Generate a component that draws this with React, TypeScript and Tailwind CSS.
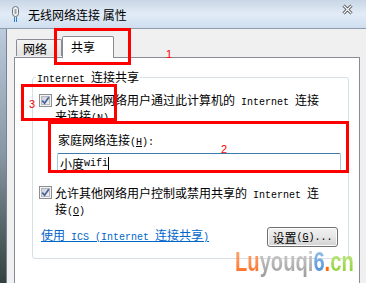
import type { ReactNode } from 'react';

// Latin runs in the dialog use a half-width mono face, like SimSun does
function M({ children }: { children: ReactNode }) {
  return <span className="font-['Liberation_Mono',monospace] text-[10px]">{children}</span>;
}

function CheckBox() {
  return (
    <svg width="13" height="13" viewBox="0 0 13 13" className="shrink-0">
      <defs>
        <linearGradient id="cbfill" x1="0" y1="0" x2="1" y2="1">
          <stop offset="0" stopColor="#c9ced6" />
          <stop offset="1" stopColor="#f4f5f7" />
        </linearGradient>
      </defs>
      <rect x="0.5" y="0.5" width="12" height="12" fill="#f4f4f4" stroke="#8e8f8f" />
      <rect x="2.5" y="2.5" width="8" height="8" fill="url(#cbfill)" stroke="#b3b8c0" />
      <path d="M3.3 6.6 L5.6 9.2 L9.8 3.2" fill="none" stroke="#4a5f97" strokeWidth="1.7" />
    </svg>
  );
}

function TitleBar() {
  return (
    <div className="h-[29px] shrink-0 flex items-center border-b border-[#8d9bad] bg-linear-to-b from-[#c9d6e5] via-[#e2ecf7] to-[#cfdeef]">
      <svg width="7" height="16" viewBox="0 0 7 16" className="ml-[12px]">
        <rect x="0.5" y="0.5" width="6" height="10" rx="3" fill="#f2f4f6" stroke="#6b6f75" />
        <rect x="2.5" y="3" width="2" height="5" fill="#9aa2ab" />
        <rect x="2" y="11" width="1" height="5" fill="#2f7fd0" />
        <rect x="4" y="11" width="1" height="5" fill="#2f7fd0" />
      </svg>
      <span className="ml-[9px]">无线网络连接 属性</span>
    </div>
  );
}

function GroupBox() {
  return (
    <div className="relative ml-[17px] mt-[19px] w-[317px] border border-[#d5dfe5] rounded-[3px] pb-[11px]">
      <span className="absolute left-[3px] -top-[8px] bg-white px-[1px]">
        <M>Internet </M>连接共享
      </span>

      <div className="mt-[16px] flex">
        <div className="ml-[6px]">
          <CheckBox />
        </div>
        <div className="ml-[3px] -mt-[1px]">
          允许其他网络用户通过此计算机的<M> Internet </M>连接
          <br />
          来连接<M>(<u>N</u>)</M>
        </div>
      </div>

      <div className="mt-[8px] ml-[25px]">
        家庭网络连接<M>(<u>H</u>):</M>
      </div>

      <div className="mt-[4px] ml-[24px] w-[284px] h-[20px] flex items-center pl-[2px] border border-t-[#3d7bad] border-x-[#a4c9e3] border-b-[#b7d9ed] rounded-[2px]">
        <span>小度</span>
        <M>wifi</M>
        <span className="w-[1px] h-[13px] bg-black" />
      </div>

      <div className="mt-[13px] flex">
        <div className="ml-[6px]">
          <CheckBox />
        </div>
        <div className="ml-[3px]">
          允许其他网络用户控制或禁用共享的<M> Internet </M>连
          <br />
          接<M>(<u>O</u>)</M>
        </div>
      </div>

      <div className="mt-[9px] flex items-start justify-between">
        <span className="ml-[8px] mt-[1px] text-[#0066cc] underline">
          使用<M> ICS (Internet </M>连接共享<M>)</M>
        </span>
        <button className="mr-[10px] w-[71px] h-[20px] rounded-[3px] border border-[#707070] bg-linear-to-b from-[#f2f2f2] via-[#e6e6e6] to-[#d2d2d2] shadow-[inset_0_0_0_1px_#fcfcfc] flex items-center justify-center">
          设置<M>(<u>G</u>)...</M>
        </button>
      </div>
    </div>
  );
}

function Watermark() {
  return (
    <div className="absolute left-[235px] top-[247px] origin-left scale-x-[0.72] whitespace-nowrap font-['Liberation_Sans',sans-serif] font-bold text-[28px] leading-[30px]">
      <span className="bg-linear-to-b from-[#fbb07a] to-[#ff6400] bg-clip-text text-transparent">Lu</span>
      <span className="bg-linear-to-b from-[#d8d8d8] to-[#9c9c9c] bg-clip-text text-transparent">youqi</span>
      <span className="bg-linear-to-b from-[#a4c8ee] to-[#3b86d6] bg-clip-text text-transparent">6</span>
      <span className="text-[#ff6a00]">.</span>
      <span className="bg-linear-to-b from-[#cdee90] to-[#86cc1c] bg-clip-text text-transparent">cn</span>
    </div>
  );
}

export default function App() {
  return (
    <div className="relative w-[366px] h-[283px] overflow-hidden flex flex-col bg-[#f0f0f0] text-black text-[12px] leading-[13px] font-['Noto_Sans_CJK_SC',sans-serif]">
      <TitleBar />

      <div className="flex flex-1">
        <div className="w-[7px] shrink-0 border-r border-[#75838f] bg-linear-to-b from-[#bccbdd] via-[#8796a3] to-[#33413e]" />

        <div className="flex-1 flex flex-col pl-[7px] pr-[6px] pt-[7px]">
          <div className="flex items-end pl-[2px]">
            <div className="mb-[1px] w-[46px] h-[17px] pl-[6px] pt-[2px] border border-b-0 border-[#898c95] rounded-t-[2px] bg-linear-to-b from-[#f3f3f3] to-[#e3e3e3]">
              网络
            </div>
            <div className="relative z-10 -mb-[1px] w-[52px] h-[22px] pl-[8px] pt-[3px] border border-b-0 border-[#898c95] rounded-t-[2px] bg-white">
              共享
            </div>
          </div>

          <div className="flex-1 bg-white border border-b-0 border-[#898c95]">
            <GroupBox />
          </div>
        </div>
      </div>

      {/* window close glyph */}
      <svg width="11" height="11" viewBox="0 0 11 11" className="absolute left-[342px] top-[4px]">
        <path d="M1.5 1.5 L9.5 9.5 M9.5 1.5 L1.5 9.5" stroke="#3a3f45" strokeWidth="3" />
        <path d="M1.5 1.5 L9.5 9.5 M9.5 1.5 L1.5 9.5" stroke="#ffffff" strokeWidth="1.3" />
      </svg>

      {/* red annotation boxes */}
      <div className="absolute left-[54px] top-[28px] w-[77px] h-[37px] border-[3px] border-[#ff0000]" />
      <div className="absolute left-[21px] top-[84px] w-[96px] h-[37px] border-[3px] border-[#ff0000]" />
      <div className="absolute left-[48px] top-[121px] w-[301px] h-[52px] border-[3px] border-[#ff0000]" />
      <span className="absolute left-[166px] top-[49px] text-[11px] leading-[11px] text-[#ff0000] font-['Liberation_Sans',sans-serif]">1</span>
      <span className="absolute left-[221px] top-[144px] text-[11px] leading-[11px] text-[#ff0000] font-['Liberation_Sans',sans-serif]">2</span>
      <span className="absolute left-[29px] top-[99px] text-[11px] leading-[11px] text-[#ff0000] font-['Liberation_Sans',sans-serif]">3</span>

      <Watermark />
    </div>
  );
}
